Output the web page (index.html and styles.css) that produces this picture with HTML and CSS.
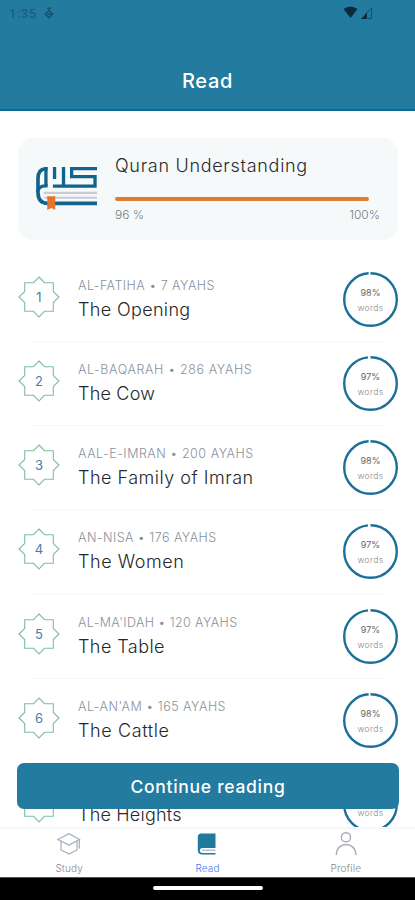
FILE: index.html
```html
<!DOCTYPE html>
<html lang="en">
<head>
<meta charset="utf-8">
<title>Read</title>
<link rel="stylesheet" href="styles.css">
</head>
<body>
<svg class="defs" width="0" height="0">
  <symbol id="star" viewBox="0 0 42 42"><path d="M21 1 26.5 6.7H35.3V15.5L41 21 35.3 26.5V35.3H26.5L21 41 15.5 35.3H6.7V26.5L1 21 6.7 15.5V6.7H15.5Z" fill="none" stroke="#82bca0" stroke-width="1.1"/></symbol>
</svg>
<div class="phone">
  <header class="header">
    <div class="status">
      <span class="time">1:35</span>
      <svg class="status-app" viewBox="0 0 10 12"><path d="M3 1.2H7M5 1V4M5 3.5 8.7 7 5 10.8 1.3 7Z M3.5 7H6.5" fill="none" stroke="#174e68" stroke-width="1.3"/></svg>
      <svg class="signals" viewBox="0 0 31 14"><path d="M.5 3Q7.5-2 14.5 3L7.5 12Z" fill="#0b2b3b"/><path d="M18 13 24 6.5V13Z" fill="#0b2b3b"/><path d="M22 8.5 28.5 2V12.5H23" fill="none" stroke="#174e66"/></svg>
    </div>
    <h1>Read</h1>
  </header>
  <main class="content">
    <section class="card">
      <svg class="logo" viewBox="30 35 190 137">
        <path d="M68 42.5H61Q39 44 39 72V115Q40 147 68 147H217" fill="none" stroke="#10638d" stroke-width="11"/>
        <path d="M63 37V95M89 37V73M116 37V95M84 95H211V66H140.500V42H217" fill="none" stroke="#10638d" stroke-width="10"/>
        <path d="M37 112Q42 94 60 94H68" fill="none" stroke="#10638d" stroke-width="10"/>
        <path d="M56 115H217M58 130H217" stroke="#c9ccd1" stroke-width="6.500"/>
        <path d="M67 125H91V167L79 161 67 167Z" fill="#e2752a"/>
      </svg>
      <div class="progress">
        <h2>Quran Understanding</h2>
        <div class="track"></div>
        <div class="scale"><span>96 %</span><span>100%</span></div>
      </div>
    </section>
    <ul class="list">
      <li><div class="star"><svg><use href="#star"/></svg><b>1</b></div><div class="name"><small class="s1">AL-FATIHA • 7 AYAHS</small><strong class="t1">The Opening</strong></div><div class="ring"><svg viewBox="0 0 55 55"><circle pathLength="100" stroke-dasharray="98.8 1.2" cx="27.5" cy="27.5" r="26.3"/></svg><span>98%</span><em>words</em></div></li>
      <li><div class="star"><svg><use href="#star"/></svg><b>2</b></div><div class="name"><small class="s2">AL-BAQARAH • 286 AYAHS</small><strong class="t2">The Cow</strong></div><div class="ring"><svg viewBox="0 0 55 55"><circle pathLength="100" stroke-dasharray="98.4 1.6" cx="27.5" cy="27.5" r="26.3"/></svg><span>97%</span><em>words</em></div></li>
      <li><div class="star"><svg><use href="#star"/></svg><b>3</b></div><div class="name"><small class="s3">AAL-E-IMRAN • 200 AYAHS</small><strong class="t3">The Family of Imran</strong></div><div class="ring"><svg viewBox="0 0 55 55"><circle pathLength="100" stroke-dasharray="98.8 1.2" cx="27.5" cy="27.5" r="26.3"/></svg><span>98%</span><em>words</em></div></li>
      <li><div class="star"><svg><use href="#star"/></svg><b>4</b></div><div class="name"><small class="s4">AN-NISA • 176 AYAHS</small><strong class="t4">The Women</strong></div><div class="ring"><svg viewBox="0 0 55 55"><circle pathLength="100" stroke-dasharray="98.4 1.6" cx="27.5" cy="27.5" r="26.3"/></svg><span>97%</span><em>words</em></div></li>
      <li><div class="star"><svg><use href="#star"/></svg><b>5</b></div><div class="name"><small class="s5">AL-MA'IDAH • 120 AYAHS</small><strong class="t5">The Table</strong></div><div class="ring"><svg viewBox="0 0 55 55"><circle pathLength="100" stroke-dasharray="98.4 1.6" cx="27.5" cy="27.5" r="26.3"/></svg><span>97%</span><em>words</em></div></li>
      <li><div class="star"><svg><use href="#star"/></svg><b>6</b></div><div class="name"><small class="s6">AL-AN'AM • 165 AYAHS</small><strong class="t6">The Cattle</strong></div><div class="ring"><svg viewBox="0 0 55 55"><circle pathLength="100" stroke-dasharray="98.8 1.2" cx="27.5" cy="27.5" r="26.3"/></svg><span>98%</span><em>words</em></div></li>
      <li><div class="star"><svg><use href="#star"/></svg></div><div class="name"><small>&nbsp;</small><strong class="t7">The Heights</strong></div><div class="ring"><svg viewBox="0 0 55 55"><circle pathLength="100" stroke-dasharray="98.8 1.2" cx="27.5" cy="27.5" r="26.3"/></svg><span>&nbsp;</span><em>words</em></div></li>
    </ul>
    <button class="continue">Continue reading</button>
  </main>
  <nav class="tabs">
    <a><svg viewBox="0 0 24 24"><path d="M.8 7.5 12 1.8 22.5 7.5 12 13ZM4 9.500V18L12 22 20 18V9.500M22.3 7.5V16.5" fill="none" stroke="#a3aebd" stroke-width="1.2"/></svg><span>Study</span></a>
    <a class="active"><svg viewBox="0 0 24 24"><path d="M5.5 1.5H20.5V16H7Q5 16.3 4.7 18.5 5 21 7.5 21H20.5V22.5H6.500Q2.8 22 2.8 18.5V4.500Q2.8 2 5.5 1.5Z" fill="#207a9e"/><path d="M7 18.3H20.5" stroke="#a9c6d5" stroke-width="1.6"/></svg><span>Read</span></a>
    <a><svg viewBox="0 0 24 24"><circle cx="12" cy="5.3" r="4.6" fill="none" stroke="#a5abb8" stroke-width="1.4"/><path d="M2.3 23C2.3 9 21.9 9 21.9 23" fill="none" stroke="#a5abb8" stroke-width="1.4"/></svg><span>Profile</span></a>
  </nav>
  <footer class="home"><i></i></footer>
</div>
</body>
</html>
```

FILE: styles.css
```css
* { box-sizing: border-box; }
body { margin: 0; background: #fff; font-family: Inter, "Open Sans", sans-serif; font-weight: 300; }
h1, h2, ul { margin: 0; padding: 0; }
.defs { display: block; height: 0; }
.phone { width: 415px; height: 900px; display: grid; grid-template-rows: 111px 716px 50px 23px; overflow: hidden; }
.header { background: #237ba0; border-bottom: 2px solid #096c98; }
.status { height: 26px; padding-left: 9px; display: flex; align-items: center; color: #185a78; }
.time { width: 30px; font: 400 13px Roboto, sans-serif; letter-spacing: .7px; }
.status-app { width: 10px; height: 12px; margin-left: 5px; }
.signals { width: 31px; height: 14px; margin-left: 289px; }
h1 { padding-top: 42px; color: #fff; font-size: 20px; line-height: 26px; font-weight: 500; text-align: center; letter-spacing: .7px; }
.content { position: relative; overflow: hidden; padding: 27px 17px 0 18px; background: #fff; }
.card { height: 102px; border-radius: 15px; background: #f5f9fa; display: flex; padding: 0 18px 0 17px; }
.logo { width: 63px; height: 46px; margin-top: 28px; flex: none; }
.progress { flex: 1; margin-left: 17px; padding-top: 16px; }
h2 { font-size: 18px; line-height: 24px; font-weight: 300; color: #292b2d; letter-spacing: .7px; white-space: nowrap; }
.track { width: 254px; height: 4px; border-radius: 2px; background: #df7c30; margin-top: 19px; }
.scale { display: flex; justify-content: space-between; color: #777d80; font-size: 12px; line-height: 16px; margin-top: 6px; }
.list { list-style: none; margin-top: 18px; }
li { height: 84.15px; display: flex; align-items: flex-start; position: relative; }
li::after { content: ""; position: absolute; left: 14px; right: 14px; bottom: 0; height: 1px; background: #f7f8f9; }
.star { width: 42px; height: 42px; margin-top: 18px; display: grid; flex: none; }
.star > * { grid-area: 1 / 1; }
.star svg { width: 42px; height: 42px; }
.star b { place-self: center; font-size: 13px; line-height: 18px; font-weight: 400; color: #4a7ca8; }
.name { flex: 1; margin-left: 18px; padding-top: 19px; white-space: nowrap; }
small { display: block; font-size: 12.5px; line-height: 18px; color: #89929e; }
strong { display: block; font-size: 18px; line-height: 26px; font-weight: 300; color: #25282b; margin-top: 2px; }
.s1 { letter-spacing: .47px; }
.s2 { letter-spacing: .62px; }
.s3 { letter-spacing: .52px; }
.s4 { letter-spacing: .46px; }
.s5 { letter-spacing: .4px; }
.s6 { letter-spacing: .49px; }
.t1 { letter-spacing: .35px; }
.t2 { letter-spacing: .2px; }
.t3 { letter-spacing: .5px; }
.t4 { letter-spacing: .55px; }
.t5 { letter-spacing: .43px; }
.t6 { letter-spacing: .6px; }
.t7 { letter-spacing: .2px; }
.ring { width: 55px; height: 55px; margin-top: 14px; display: flex; flex-direction: column; align-items: center; position: relative; padding-top: 14px; }
.ring svg { position: absolute; inset: 0; width: 55px; height: 55px; transform: rotate(-90deg); }
.ring circle { fill: none; stroke: #1c6f99; stroke-width: 2.4; }
.ring span { font-size: 9px; line-height: 14px; color: #666; font-weight: 400; }
.ring em { font-size: 8.5px; line-height: 14px; font-style: normal; color: #888; letter-spacing: .4px; margin-top: 1px; }
.continue { position: absolute; left: 17px; top: 652px; width: 382px; height: 46px; border: 0; border-radius: 7px; background: #237ba0; color: #fff; font: 500 17.5px Inter, sans-serif; letter-spacing: .7px; padding: 0; }
.tabs { display: grid; grid-template-columns: repeat(3, 1fr); background: #fff; border-top: 2px solid #f6f6f7; }
.tabs a { display: flex; flex-direction: column; align-items: center; padding-top: 3px; font-size: 10px; line-height: 13px; color: #85888d; }
.tabs svg { width: 24px; height: 24px; margin-bottom: 6px; }
.tabs span { letter-spacing: .15px; }
.tabs .active { color: #4777f5; }
.home { background: #000; display: flex; justify-content: center; padding-top: 8px; border-top: 1px solid #555; }
.home i { width: 110px; height: 4px; border-radius: 2px; background: #fff; }
```
